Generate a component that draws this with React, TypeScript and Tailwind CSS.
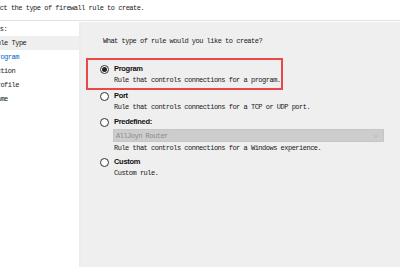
import { ChevronDown } from "lucide-react";

const mono = "font-['Liberation_Mono',monospace] text-[7px] leading-[10px] tracking-[-0.5px] text-[#1a1a1a]";

function Radio({ checked }: { checked?: boolean }) {
  return (
    <span className="flex h-[9px] w-[9px] shrink-0 items-center justify-center rounded-full border border-[#333] bg-white">
      {checked && <span className="h-[5px] w-[5px] rounded-full bg-[#222]" />}
    </span>
  );
}

function Option({ label, desc, checked, children, className = "" }: { label: string; desc: string; checked?: boolean; children?: React.ReactNode; className?: string }) {
  return (
    <div className={`relative flex flex-col ${className}`}>
      <div className="flex h-[10px] items-center gap-[5px]">
        <Radio checked={checked} />
        <span className="font-['Liberation_Sans',sans-serif] text-[7.5px] font-bold leading-[10px] tracking-[-0.3px] text-[#111]">{label}</span>
      </div>
      {children}
      <p className={`${mono} ml-[14px] mt-[1px]`}>{desc}</p>
    </div>
  );
}

export default function App() {
  const steps = ["Rule Type", "Program", "Action", "Profile", "Name"];

  return (
    <div className="flex h-[267px] w-[400px] flex-col overflow-hidden bg-white">
      {/* header */}
      <div className="h-[20px] pt-[3px]">
        <p className={`${mono} ml-[-15px] whitespace-nowrap`}>Select the type of firewall rule to create.</p>
      </div>
      <div className="h-px bg-[#e0e0e0]" />
      <div className="h-[1px] bg-white" />

      <div className="flex flex-1">
        {/* steps */}
        <div className="w-[81px] shrink-0 border-r-2 border-[#ececec] bg-white">
          <div className={`${mono} ml-[-15px] flex h-[14px] items-center whitespace-nowrap`}>Steps:</div>
          {steps.map((s, i) => (
            <div
              key={s}
              className={`flex h-[14px] items-center whitespace-nowrap ${i === 0 ? "bg-[#efefef]" : ""}`}
            >
              <span className={`${mono} ml-[-7px] ${i === 1 ? "!text-[#0066cc]" : ""}`}>{s}</span>
            </div>
          ))}
        </div>

        {/* content */}
        <div className="flex flex-1 flex-col bg-[#efefef] pl-[19px] pt-[14px]">
          <p className={`${mono} ml-[3px] whitespace-nowrap`}>What type of rule would you like to create?</p>

          <Option label="Program" desc="Rule that controls connections for a program." checked className="mt-[18px]">
            <div className="absolute left-[-14px] top-[-6px] h-[32px] w-[197px] border-2 border-[#e84848]" />
          </Option>

          <Option label="Port" desc="Rule that controls connections for a TCP or UDP port." className="mt-[6px]" />

          <Option label="Predefined:" desc="Rule that controls connections for a Windows experience." className="mt-[5px]">
            <div className="ml-[13px] mt-[2px] flex h-[13px] w-[271px] items-center justify-between border border-[#c6c6c6] bg-[#cdcdcd] pl-[2px] pr-[3px]">
              <span className={`${mono} !text-[#8c8c8c]`}>AllJoyn Router</span>
              <ChevronDown size={8} strokeWidth={1.5} className="text-[#a5a5a5]" />
            </div>
          </Option>

          <Option label="Custom" desc="Custom rule." className="mt-[4px]" />
        </div>
      </div>
    </div>
  );
}
